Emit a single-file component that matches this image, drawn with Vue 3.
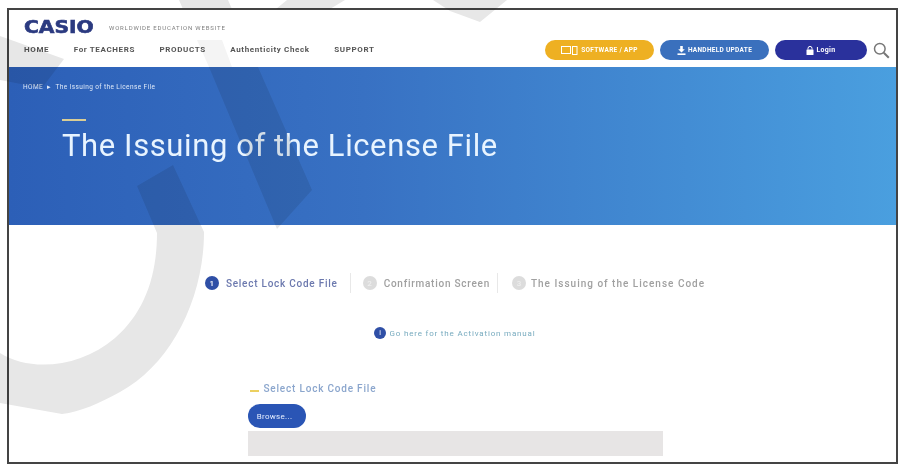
<template>
  <div class="page">
    <div class="frame">
      <header class="site-header">
        <div class="brand-row">
          <span class="logo">CASIO</span>
          <span class="tagline">WORLDWIDE EDUCATION WEBSITE</span>
        </div>
        <div class="nav-row">
          <nav class="nav">
            <a v-for="item in navItems" :key="item">{{ item }}</a>
          </nav>
          <div class="actions">
            <a class="pill pill-yellow">
              <svg width="17" height="9" viewBox="0 0 17 9" fill="none" stroke="#fff" stroke-width="1">
                <rect x="0.5" y="0.5" width="9" height="7" />
                <rect x="11.5" y="0.5" width="4.5" height="8" />
              </svg>
              SOFTWARE / APP
            </a>
            <a class="pill pill-blue">
              <svg width="9" height="9" viewBox="0 0 9 9" fill="#fff">
                <path d="M3.2 0h2.6v3.2h2L4.5 6.4 1.200 3.200h2z" />
                <rect x="0.500" y="7.400" width="8" height="1.600" />
              </svg>
              HANDHELD UPDATE
            </a>
            <a class="pill pill-navy">
              <svg width="8" height="9" viewBox="0 0 8 9" fill="#fff">
                <path d="M2 3.500V2.400a2 2 0 0 1 4 0v1.100" fill="none" stroke="#fff" stroke-width="1" />
                <rect x="0.500" y="3.500" width="7" height="5.500" rx="0.500" />
              </svg>
              Login
            </a>
            <svg class="search" width="17" height="17" viewBox="0 0 17 17" fill="none" stroke="#777">
              <circle cx="6.800" cy="6.800" r="5.300" stroke-width="1.500" />
              <path d="M10.800 10.800l5 5" stroke-width="2" />
            </svg>
          </div>
        </div>
      </header>

      <section class="hero">
        <p class="crumbs">HOME &nbsp;▸&nbsp; The Issuing of the License File</p>
        <div class="hero-dash"></div>
        <h1>The Issuing of the License File</h1>
      </section>

      <main class="content">
        <ol class="steps">
          <template v-for="(step, idx) in steps" :key="step">
            <li v-if="idx > 0" class="step-sep"></li>
            <li class="step" :class="{active: idx === 0}">
              <span class="step-num">{{ idx + 1 }}</span>
              {{ step }}
            </li>
          </template>
        </ol>

        <a class="manual-link"><span class="info">i</span>Go here for the Activation manual</a>

        <div class="upload">
          <h2><span class="mini-dash"></span>Select Lock Code File</h2>
          <button class="browse">Browse...</button>
          <div class="file-box"></div>
        </div>
      </main>
    </div>

    <!-- gray logo watermark lying over the whole page -->
    <svg class="watermark" width="900" height="468" viewBox="0 0 900 468">
      <path d="M179 0H228L231.500 8H182.500Z" />
      <path class="faint" d="M197 40H222L232 67H209Z" />
      <path d="M209 67H258L312 190 277 229Z" />
      <path d="M137 186L173 165 204 232C204 300 170 365 120 392C100 403 80 412 62 414L0 403V353C30 372 80 368 115 338C145 312 157 275 157 233Z" />
      <path d="M0 36L64 59 42 88 0 80Z" />
      <path d="M287 0H345L330 9H276Z" />
      <path d="M433 0H507L480 22 450 11Z" />
    </svg>
  </div>
</template>

<script setup>
const navItems = ["HOME", "For TEACHERS", "PRODUCTS", "Authenticity Check", "SUPPORT"];
const steps = ["Select Lock Code File", "Confirmation Screen", "The Issuing of the License Code"];
</script>

<style>
html,
body {
  margin: 0;
  background: #fff;
}
</style>

<style scoped>
.page {
  position: relative;
  width: 900px;
  height: 468px;
  padding: 8px 2px 4px 7px;
  box-sizing: border-box;
  overflow: hidden;
  background: #fff;
  font-family: Roboto, "Liberation Sans", sans-serif;
}
.frame {
  height: 100%;
  box-sizing: border-box;
  border: 2px solid #444;
  background: #fff;
  overflow: hidden;
}
.watermark {
  position: absolute;
  top: 0;
  left: 0;
  fill: #e7e7e7;
  mix-blend-mode: multiply;
  pointer-events: none;
  filter: blur(0.5px);
}
.watermark .faint {
  fill: #f4f4f4;
}

/* the reference is a soft scan, so small text gets a slight blur */
.site-header,
.crumbs,
.steps,
.manual-link,
h2,
.browse {
  filter: blur(0.6px);
}
h1 {
  filter: blur(0.35px);
}

/* header */
.site-header {
  height: 57px;
  box-sizing: border-box;
  padding: 10px 6px 0 15px;
}
.brand-row {
  display: flex;
  align-items: center;
  height: 15px;
}
.logo {
  display: inline-block;
  width: 85px;
  font: bold 17px/15px "DejaVu Sans", sans-serif;
  color: #2b3a80;
  -webkit-text-stroke: 0.6px #2b3a80;
  transform: scaleX(1.19);
  transform-origin: left center;
}
.tagline {
  font-size: 6px;
  letter-spacing: 0.82px;
  color: #808080;
}
.nav-row {
  display: flex;
  justify-content: space-between;
  align-items: center;
  margin-top: 5px;
}
.nav {
  display: flex;
  gap: 24.5px;
  margin-top: -2px;
}
.nav a {
  font-size: 8px;
  font-weight: 700;
  letter-spacing: 0.63px;
  color: #555;
}
.actions {
  display: flex;
  align-items: center;
  gap: 6px;
}
.pill {
  display: flex;
  align-items: center;
  justify-content: center;
  gap: 2px;
  width: 109px;
  height: 20px;
  border-radius: 10px;
  font-size: 6.5px;
  font-weight: 700;
  letter-spacing: 0.3px;
  color: #fff;
}
.pill-yellow {
  background: #eeb022;
}
.pill-yellow svg {
  margin-right: 1px;
}
.pill-blue {
  background: #3a70bd;
}
.pill-navy {
  width: 92px;
  background: #2a319c;
  font-size: 7px;
}

/* hero */
.hero {
  height: 158px;
  box-sizing: border-box;
  padding: 16px 14px 0 14px;
  background: linear-gradient(90deg, #2c5fb7 0%, #3871c3 40%, #4a9fdf 100%);
  color: #e8f4ff;
}
.crumbs {
  margin: 0;
  font-size: 6.500px;
  line-height: 8px;
  letter-spacing: 0.4px;
  color: #dfe9f8;
}
.hero-dash {
  width: 24px;
  height: 2px;
  margin: 28px 0 0 39px;
  background: #d9cd95;
}
h1 {
  margin: 5px 0 0 39px;
  font-size: 31px;
  font-weight: 400;
  line-height: 40px;
  letter-spacing: 0.6px;
}

/* steps and form */
.content {
  padding: 48px 0 0 5px;
}
.steps {
  display: flex;
  justify-content: center;
  align-items: center;
  margin: 0;
  padding: 0;
  list-style: none;
}
.step {
  display: flex;
  align-items: center;
  gap: 7px;
  font-size: 10px;
  font-weight: 500;
  letter-spacing: 0.75px;
  color: #a0a0a0;
}
.step.active {
  color: #6c79ae;
}
.step:last-child {
  gap: 5px;
  letter-spacing: 1px;
}
.step-num {
  display: flex;
  align-items: center;
  justify-content: center;
  width: 14px;
  height: 14px;
  border-radius: 50%;
  background: #dcdcdc;
  font-size: 8px;
  letter-spacing: 0;
  color: #eee;
}
.active .step-num {
  background: #2f4fa6;
  color: #fff;
}
.step-sep {
  width: 1px;
  height: 20px;
  margin: 0 12px;
  background: #e8e8e8;
}
.step-sep:nth-last-child(2) {
  margin: 0 14px 0 7px;
}
.manual-link {
  display: flex;
  justify-content: center;
  align-items: center;
  gap: 3px;
  margin-top: 34px;
  font-size: 8px;
  letter-spacing: 0.82px;
  color: #78abbf;
}
.info {
  display: flex;
  align-items: center;
  justify-content: center;
  width: 12px;
  height: 12px;
  border-radius: 50%;
  background: #2f4fa6;
  font-size: 7px;
  color: #fff;
}
.upload {
  width: 415px;
  margin: 44px auto 0;
}
h2 {
  display: flex;
  align-items: center;
  gap: 5px;
  margin: 0;
  padding-left: 2px;
  font-size: 10px;
  font-weight: 500;
  line-height: 12px;
  letter-spacing: 0.8px;
  color: #8ba6cd;
}
.mini-dash {
  width: 9px;
  height: 2px;
  margin-top: 3px;
  background: #ecd060;
}
.browse {
  display: block;
  width: 58px;
  height: 24px;
  margin-top: 9px;
  padding: 0 4px 0 0;
  border: none;
  border-radius: 12px;
  background: #2a55b5;
  font: 8px Roboto, "Liberation Sans", sans-serif;
  letter-spacing: 0.3px;
  color: #e6eeff;
}
.file-box {
  height: 25px;
  margin-top: 3px;
  background: #e7e5e5;
}
</style>
